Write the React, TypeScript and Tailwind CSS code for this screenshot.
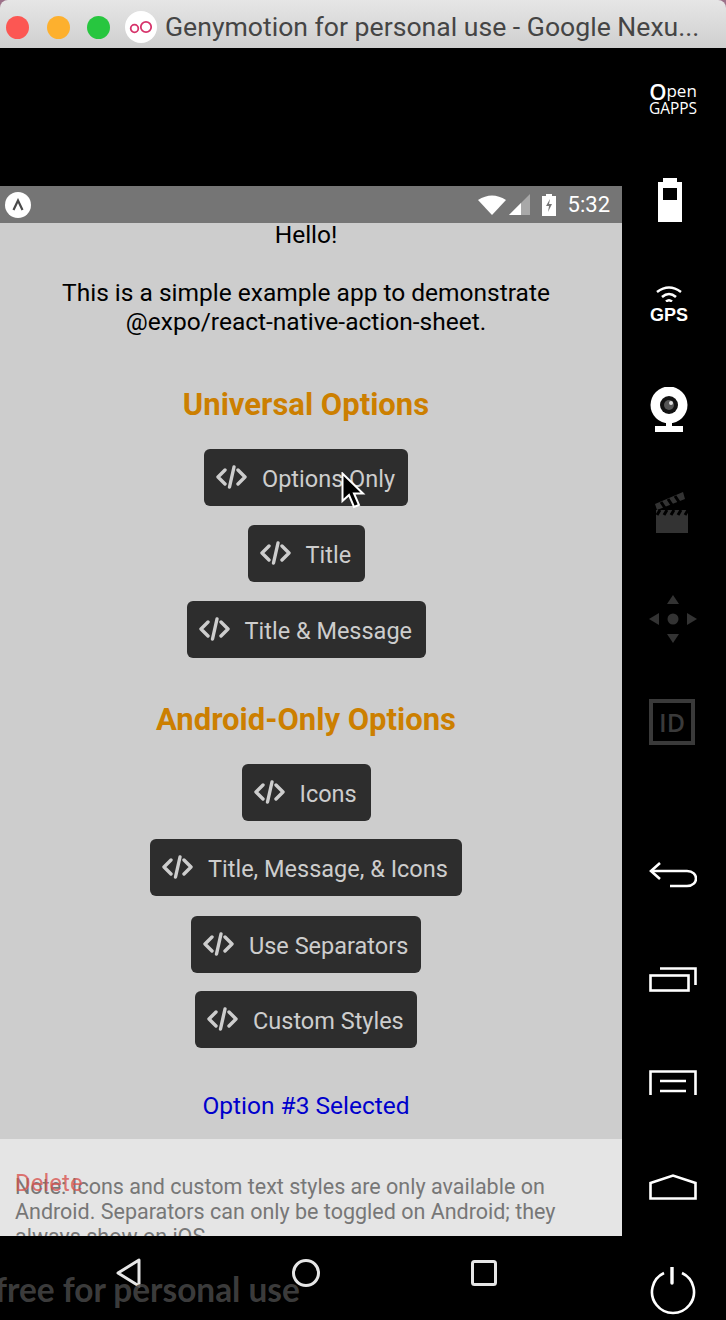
import React from 'react';

const roboto = "font-['Roboto',sans-serif]";

function CodeIcon() {
  return (
    <svg width="31" height="24" viewBox="0 0 31 24" fill="none" stroke="#cdcdcd" strokeWidth="3.4" strokeLinecap="round" strokeLinejoin="round" className="mb-[2px] shrink-0">
      <path d="M9 5 L2 12 L9 19" />
      <path d="M22 5 L29 12 L22 19" />
      <path d="M18 2 L13.5 22" />
    </svg>
  );
}

function DemoButton({ label, className }: { label: string; className: string }) {
  return (
    <div className={`flex h-[57px] items-center gap-[15px] rounded-[6px] bg-[#2d2d2d] pl-3 ${className}`}>
      <CodeIcon />
      <span className={`${roboto} pt-[4px] text-[23.5px] leading-none whitespace-nowrap text-[#cdcdcd]`}>{label}</span>
    </div>
  );
}

function SectionTitle({ children, className }: { children: React.ReactNode; className: string }) {
  return <h2 className={`${roboto} text-[31px] leading-[34px] font-bold whitespace-nowrap text-[#cc7f00] ${className}`}>{children}</h2>;
}

function TitleBar() {
  return (
    <div className="h-[48px] shrink-0 bg-[#9c7189]">
      <div className="flex h-[48px] items-center rounded-t-[8px] bg-gradient-to-b from-[#e6e6e6] to-[#cfcfcf] pt-[6px]">
        <div className="ml-[6px] h-[23px] w-[23px] rounded-full bg-[#fc5753]" />
        <div className="ml-[18px] h-[23px] w-[23px] rounded-full bg-[#fdb02e]" />
        <div className="ml-[17px] h-[23px] w-[23px] rounded-full bg-[#27c63f]" />
        <div className="ml-[15px] flex h-[32px] w-[32px] items-center justify-center rounded-full bg-white">
          <svg width="24" height="14" viewBox="0 0 24 14" fill="none" stroke="#d7336b" strokeWidth="1.8">
            <circle cx="5.5" cy="8.5" r="3.8" />
            <circle cx="17" cy="7" r="5.2" />
          </svg>
        </div>
        <span className={`${roboto} ml-[8px] text-[26.6px] leading-none whitespace-nowrap text-[#454545]`}>
          Genymotion for personal use - Google Nexu...
        </span>
      </div>
    </div>
  );
}

function StatusBar() {
  return (
    <div className="flex h-[37px] shrink-0 items-center bg-[#757575]">
      <div className="ml-[5px] flex h-[26px] w-[26px] items-center justify-center rounded-full bg-white">
        <svg width="14" height="14" viewBox="0 0 14 14" fill="none" stroke="#4a4a4a" strokeWidth="2.2">
          <path d="M2.5 12 L7 2.5 L11.5 12" />
        </svg>
      </div>
      <div className="ml-auto flex items-center">
        <svg width="28" height="20" viewBox="0 0 28 20" fill="#fff">
          <path d="M0 5 Q14 -4 28 5 L14 20 Z" />
        </svg>
        <svg width="21" height="21" viewBox="0 0 21 21" className="ml-[3px]">
          <path d="M0 21 L21 0 V21 Z" fill="#a8a8a8" />
          <path d="M0 21 L12 9 V21 Z" fill="#fff" />
        </svg>
        <svg width="14" height="22" viewBox="0 0 14 22" className="ml-[12px]">
          <path d="M4 0 H10 V2 H14 V22 H0 V2 H4 Z" fill="#fff" />
          <path d="M8 5 L4 12 H7 L6 18 L10 10 H7 Z" fill="#757575" />
        </svg>
        <span className={`${roboto} mr-[12px] ml-[12px] text-[22px] leading-none text-white`}>5:32</span>
      </div>
    </div>
  );
}

function NavBar() {
  return (
    <div className="flex h-[84px] shrink-0 items-start bg-black pt-[22px]">
      <svg width="26" height="30" viewBox="0 0 26 30" fill="none" stroke="#e6e6e6" strokeWidth="3" strokeLinejoin="round" className="ml-[116px]">
        <path d="M23 2 V28 L2 15 Z" />
      </svg>
      <svg width="30" height="30" viewBox="0 0 30 30" fill="none" stroke="#e6e6e6" strokeWidth="3" className="ml-[149px]">
        <circle cx="15" cy="15" r="12.5" />
      </svg>
      <svg width="26" height="26" viewBox="0 0 26 26" fill="none" stroke="#e6e6e6" strokeWidth="3" className="mt-[2px] ml-[150px]">
        <rect x="1.5" y="1.5" width="23" height="23" rx="2" />
      </svg>
    </div>
  );
}

function Phone() {
  return (
    <div className="relative flex w-[622px] shrink-0 flex-col">
      <div className="h-[138px] shrink-0 bg-black" />
      <StatusBar />
      <div className="flex h-[916px] shrink-0 flex-col items-center overflow-hidden bg-[#cdcdcd] pr-[10px] text-center">
        <p className={`${roboto} -mt-[1px] text-[24.5px] leading-[25px] text-black`}>Hello!</p>
        <p className={`${roboto} mt-[31px] text-[24.5px] leading-[29px] whitespace-nowrap text-black`}>
          This is a simple example app to demonstrate
          <br />
          @expo/react-native-action-sheet.
        </p>
        <SectionTitle className="mt-[52px]">Universal Options</SectionTitle>
        <DemoButton label="Options Only" className="mt-[27px] w-[204px]" />
        <DemoButton label="Title" className="mt-[19px] w-[117px]" />
        <DemoButton label="Title & Message" className="mt-[19px] w-[239px]" />
        <SectionTitle className="mt-[45px]">Android-Only Options</SectionTitle>
        <DemoButton label="Icons" className="mt-[27px] w-[129px]" />
        <DemoButton label="Title, Message, & Icons" className="mt-[18px] w-[312px]" />
        <DemoButton label="Use Separators" className="mt-[20px] w-[230px]" />
        <DemoButton label="Custom Styles" className="mt-[18px] w-[222px]" />
        <p className={`${roboto} mt-[44px] text-[24.5px] leading-[28px] text-[#0000cc]`}>Option #3 Selected</p>
      </div>
      <div className="relative h-[97px] shrink-0 overflow-hidden bg-[#e5e5e5] pt-[35px] pl-[15px]">
        <p className={`${roboto} w-[580px] text-[21.5px] leading-[25px] text-[#777]`}>
          Note: Icons and custom text styles are only available on
          <br />
          Android. Separators can only be toggled on Android; they
          <br />
          always show on iOS.
        </p>
        <span className={`${roboto} absolute top-[32px] left-[15px] text-[24px] leading-[25px] text-[#d9534f]/80`}>Delete</span>
      </div>
      <NavBar />
      <span className="pointer-events-none absolute top-[1219px] -left-[5px] font-['Lato',sans-serif] text-[33.4px] leading-[44px] font-bold whitespace-nowrap text-[#444]/90">
        free for personal use
      </span>
    </div>
  );
}

function SideBar() {
  return (
    <div className="flex w-[104px] shrink-0 flex-col items-start bg-black pl-[27px]">
      <div className="mt-[34px] flex w-[48px] flex-col items-center font-['Open_Sans',sans-serif] text-white">
        <span className="flex h-[18px] items-end text-[17px] leading-[18px]">
          <span className="text-[22px] leading-[18px] font-semibold">O</span>pen
        </span>
        <span className="mt-[2px] text-[15.5px] leading-[13px]">GAPPS</span>
      </div>
      <svg width="24" height="44" viewBox="0 0 24 44" fill="#fff" className="mt-[63px] ml-[9px]">
        <path fillRule="evenodd" d="M5 0 H19 V4 H24 V44 H0 V4 H5 Z M5 10 V22 H19 V10 Z" />
      </svg>
      <div className="mt-[64px] ml-0 flex w-[40px] flex-col items-center">
        <svg width="26" height="16" viewBox="0 0 26 16" fill="none" stroke="#fff" strokeWidth="2.6">
          <path d="M1 6 Q13 -3 25 6" />
          <path d="M6 11 Q13 5 20 11" />
          <path d="M10 15.5 Q13 13 16 15.5" />
        </svg>
        <span className="mt-[6px] font-['Liberation_Sans',sans-serif] text-[18px] leading-[15px] font-bold text-white">GPS</span>
      </div>
      <svg width="38" height="45" viewBox="0 0 38 45" className="mt-[64px] ml-[1px]">
        <circle cx="19" cy="18" r="18.5" fill="#fff" />
        <circle cx="19" cy="18" r="9" fill="#111" />
        <circle cx="19" cy="18" r="5" fill="#555" />
        <circle cx="21" cy="16" r="2" fill="#ddd" />
        <rect x="16" y="34" width="6" height="5" fill="#fff" />
        <rect x="5" y="39" width="28" height="6" fill="#fff" />
      </svg>
      <svg width="36" height="42" viewBox="0 0 36 42" className="mt-[59px] ml-[4px]">
        <path d="M2 13 L30 1 L32 8 L4 19 Z" fill="#333" />
        <path d="M8 11 L12 17 M15 8 L19 14 M22 5 L26 11" stroke="#000" strokeWidth="3" />
        <rect x="3" y="19" width="32" height="23" fill="#333" />
        <path d="M7 19 L4 24 M14 19 L11 24 M21 19 L18 24 M28 19 L25 24 M35 19 L32 24" stroke="#000" strokeWidth="3" />
      </svg>
      <svg width="48" height="48" viewBox="0 0 48 48" fill="#333" className="mt-[62px]">
        <path d="M24 0 L30 9 H18 Z" />
        <path d="M24 48 L18 39 H30 Z" />
        <path d="M0 24 L10 18 V30 Z" />
        <path d="M48 24 L38 18 V30 Z" />
        <circle cx="24" cy="24" r="5.5" />
      </svg>
      <div className="mt-[56px] flex h-[46px] w-[46px] items-center justify-center border-[4px] border-[#3a3a3a] font-['Open_Sans',sans-serif] text-[25px] leading-none font-semibold text-[#3a3a3a]">
        ID
      </div>
      <svg width="48" height="26" viewBox="0 0 48 26" fill="none" stroke="#fff" strokeWidth="2.6" className="mt-[117px]">
        <path d="M11 1 L2 9 L11 17" />
        <path d="M2 9 H38 C50 9 50 24 38 24 H21" />
      </svg>
      <svg width="48" height="25" viewBox="0 0 48 25" fill="none" stroke="#fff" strokeWidth="2.6" className="mt-[79px]">
        <path d="M11 1.5 H46.5 V18" />
        <rect x="1.5" y="8.5" width="38" height="15" />
      </svg>
      <svg width="48" height="25" viewBox="0 0 48 25" fill="none" stroke="#fff" strokeWidth="2.6" className="mt-[78px]">
        <path d="M1.5 25 V1.5 H46.5 V25" />
        <path d="M11 11 H37 M11 21 H37" />
      </svg>
      <svg width="48" height="26" viewBox="0 0 48 26" fill="none" stroke="#fff" strokeWidth="2.6" className="mt-[79px]">
        <path d="M1.5 9 L24 1.5 L46.5 9 V24.5 H1.5 Z" />
      </svg>
      <svg width="46" height="48" viewBox="0 0 46 48" fill="none" stroke="#fff" strokeWidth="2.6" className="mt-[67px] ml-[1px]">
        <path d="M14 6 A21 21 0 1 0 32 6" />
        <path d="M22 0 V16" strokeWidth="3.4" strokeLinecap="round" />
      </svg>
    </div>
  );
}

function Cursor() {
  return (
    <svg width="26" height="38" viewBox="0 0 26 38" className="pointer-events-none absolute top-[472px] left-[341px]">
      <path d="M1.5 1.5 V29 L8 23 L13 35 L18 33 L13 21.5 L22 21.5 Z" fill="#000" stroke="#fff" strokeWidth="2" />
    </svg>
  );
}

export default function App() {
  return (
    <div className="relative flex h-[1320px] w-[726px] flex-col overflow-hidden bg-black">
      <TitleBar />
      <div className="flex min-h-0 flex-1">
        <Phone />
        <SideBar />
      </div>
      <Cursor />
    </div>
  );
}
